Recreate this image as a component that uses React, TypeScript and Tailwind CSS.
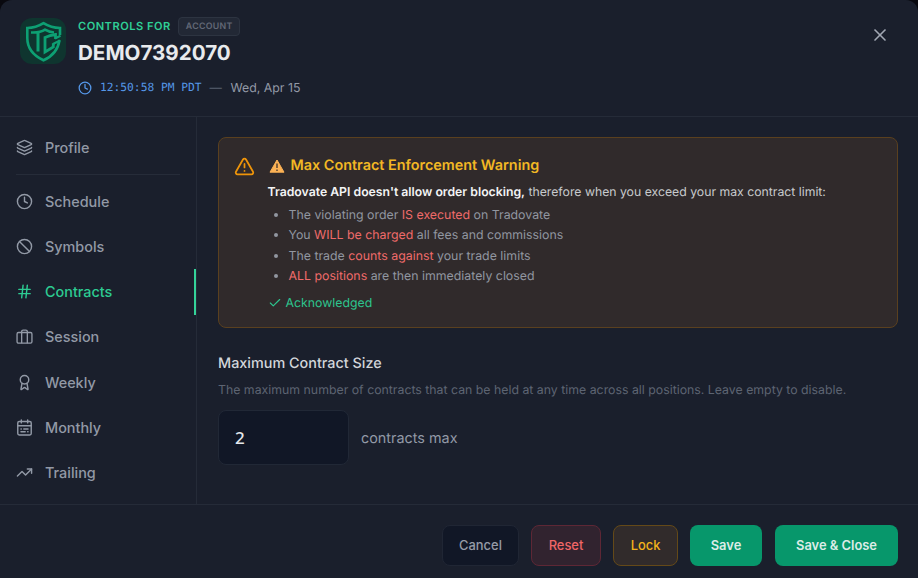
import React, { useState } from 'react';
import {
  Award,
  Ban,
  Check,
  Clock,
  Hash,
  Layers,
  TrendingUp,
  TriangleAlert,
  X,
} from 'lucide-react';

type Section =
  | 'Profile'
  | 'Schedule'
  | 'Symbols'
  | 'Contracts'
  | 'Session'
  | 'Weekly'
  | 'Monthly'
  | 'Trailing';

interface NavItemProps {
  label: Section;
  icon: React.ReactNode;
  active: boolean;
  onClick: () => void;
}

const iconProps = { size: 17, strokeWidth: 2 };

const SuitcaseIcon = () => (
  <svg width="17" height="17" viewBox="0 0 24 24" fill="none" stroke="currentColor" strokeWidth="1.9" strokeLinejoin="round">
    <rect x="1.5" y="5" width="21" height="15" rx="2" />
    <path d="M8 20V3.500a2 2 0 0 1 2-2h4a2 2 0 0 1 2 2v16.500" />
  </svg>
);

const MonthIcon = () => (
  <svg width="17" height="17" viewBox="0 0 24 24" fill="none" stroke="currentColor" strokeWidth="2" strokeLinecap="round" strokeLinejoin="round">
    <rect x="2.5" y="3.5" width="19" height="19" rx="2" />
    <path d="M7.5 1.5v4M16.5 1.5v4M2.5 9.5h19M7 14h.5M11 14h6M7 18h6M16.5 18h.5" />
  </svg>
);

const Logo = () => (
  <div className="mt-[18px] flex h-[46px] w-[46px] shrink-0 items-center justify-center rounded-xl bg-[#0f352f]">
    <svg width="37" height="41" viewBox="0 0 37 41" fill="none" stroke="#0da073" strokeWidth="2.6">
      <path d="M35 14V7C28.500 7 23 5 18.500 2.200C14 5 8.500 7 2.300 7V17c0 10.500 7 18 16.200 22.300C27 35.500 33 29.500 34.500 19" />
      <path d="M6 11.500c6 .3 11-.8 14-2.800c3 1.800 6 2.600 9 2.800" strokeWidth="2.600" />
      <path d="M13 12v18.500" strokeWidth="3" />
      <path d="M30.500 18v-4.500c-4 .5-7 1.300-10.500 3v14.500l8.300-5v-3.700" strokeWidth="2.800" />
      <path d="M28 23l7-3.500M30 17.500l5.500-2.800" strokeWidth="2.200" />
    </svg>
  </div>
);

const NavItem: React.FC<NavItemProps> = ({ label, icon, active, onClick }) => (
  <button
    type="button"
    onClick={onClick}
    className={`flex h-[45.200px] w-full items-center gap-3 border-r-2 pl-4 text-left text-[14.400px] font-medium ${
      active ? 'border-[#34d399] text-[#2dcb92]' : 'border-transparent text-[#9299a6]'
    }`}
  >
    {icon}
    <span>{label}</span>
  </button>
);

const navItems: { label: Section; icon: React.ReactNode }[] = [
  { label: 'Schedule', icon: <Clock {...iconProps} /> },
  { label: 'Symbols', icon: <Ban {...iconProps} /> },
  { label: 'Contracts', icon: <Hash {...iconProps} /> },
  { label: 'Session', icon: <SuitcaseIcon /> },
  { label: 'Weekly', icon: <Award {...iconProps} /> },
  { label: 'Monthly', icon: <MonthIcon /> },
  { label: 'Trailing', icon: <TrendingUp {...iconProps} /> },
];

const Red = ({ children }: { children: React.ReactNode }) => (
  <span className="text-[#ef6a6a]">{children}</span>
);

const Warning = () => (
  <div className="flex h-[191px] rounded-lg border border-[#5a401f] bg-[#302a2b] pl-[15px] pt-[17px]">
    <TriangleAlert size={21} strokeWidth={2} className="mt-px shrink-0 text-[#ee9409]" />
    <div className="ml-3 flex flex-col pl-[0.500px] pt-px">
      <h3 className="flex h-5 items-center text-[14.400px] font-semibold text-[#f2b824]">
        <svg width="16" height="14" viewBox="0 0 16 14" className="ml-[1.500px] mr-[5.500px]">
          <path d="M8 1 15 13.200H1Z" fill="#fcb255" stroke="#fcb255" strokeWidth="1" strokeLinejoin="round" />
          <path d="M8 4.500v4.500M8 10.600v1.400" stroke="#584331" strokeWidth="1.500" />
        </svg>
        Max Contract Enforcement Warning
      </h3>
      <p className="mt-[6px] text-[12.250px] leading-5 text-[#c8cacd]">
        <span className="font-semibold text-[#f3f4f5]">Tradovate API doesn't allow order blocking,</span>{' '}
        therefore when you exceed your max contract limit:
      </p>
      <ul className="mt-[3px] list-disc pl-[21px] text-[12.350px] leading-[20.400px] text-[#9196a0] marker:text-[14px]">
        <li>The violating order <Red>IS executed</Red> on Tradovate</li>
        <li>You <Red>WILL be charged</Red> all fees and commissions</li>
        <li>The trade <Red>counts against</Red> your trade limits</li>
        <li><Red>ALL positions</Red> are then immediately closed</li>
      </ul>
      <div className="mt-[6px] flex items-center gap-1 text-[12.300px] leading-5 text-[#2dc58e]">
        <Check size={14} strokeWidth={2} />
        Acknowledged
      </div>
    </div>
  </div>
);

const App: React.FC = () => {
  const [section, setSection] = useState<Section>('Contracts');
  const [maxContracts, setMaxContracts] = useState('2');

  return (
    <div className="h-[578px] w-[918px] overflow-hidden bg-[#09090f] font-['Inter',sans-serif] [text-rendering:geometricPrecision]">
      <div className="flex h-full flex-col overflow-hidden rounded-t-xl bg-[#1a1f2c]">
        <header className="flex h-[117px] shrink-0 border-b border-[#252b38] pl-5">
          <Logo />
          <div className="ml-3 flex flex-col">
            <div className="mt-[17px] flex h-[19px] items-center gap-[7.500px]">
              <span className="text-[11.100px] font-semibold tracking-[0.5px] text-[#2fcf96]">CONTROLS FOR</span>
              <span className="flex h-[19px] items-center rounded border border-[#2d3441] bg-[#222835] px-[6.500px] pt-px text-[8.800px] font-semibold tracking-[0.3px] text-[#626977]">
                ACCOUNT
              </span>
            </div>
            <h1 className="mt-[3px] text-[20.600px] font-bold leading-7 text-[#e8eaed]">DEMO7392070</h1>
            <div className="mt-[11px] flex h-5 items-center text-[12.350px] text-[#9299a6]">
              <Clock size={14} strokeWidth={2.2} className="text-[#5597e8]" />
              <span className="ml-2 font-['DejaVu_Sans_Mono',monospace] text-[11.250px] text-[#5597e8]">12:50:58 PM PDT</span>
              <span className="ml-2 pt-px text-[#596170]">—</span>
              <span className="ml-[8.500px] pt-px">Wed, Apr 15</span>
            </div>
          </div>
          <button type="button" aria-label="Close" className="ml-auto mr-[28px] mt-[25px] h-5 text-[#a1a7b3]">
            <X size={20} strokeWidth={2} />
          </button>
        </header>

        <div className="flex h-[387px] shrink-0">
          <nav className="w-[197px] shrink-0 border-r border-[#252b38] pt-2">
            <NavItem
              label="Profile"
              icon={<Layers {...iconProps} />}
              active={section === 'Profile'}
              onClick={() => setSection('Profile')}
            />
            <div className="mx-4 mb-[3.800px] mt-1 h-px bg-[#262c39]" />
            {navItems.map((item) => (
              <NavItem
                key={item.label}
                label={item.label}
                icon={item.icon}
                active={section === item.label}
                onClick={() => setSection(item.label)}
              />
            ))}
          </nav>

          <main className="flex-1 pl-[21px] pr-5 pt-5">
            <Warning />
            <h2 className="mt-[26px] text-[14.400px] font-medium leading-5 text-[#d3d6db]">Maximum Contract Size</h2>
            <p className="mt-[6px] text-[12.320px] leading-5 text-[#5d6472]">
              The maximum number of contracts that can be held at any time across all positions. Leave empty to disable.
            </p>
            <div className="mt-[10px] flex items-center gap-3">
              <input
                type="text"
                value={maxContracts}
                onChange={(e) => setMaxContracts(e.target.value)}
                className="h-[55px] w-[131px] rounded-lg border border-[#212836] bg-[#111726] px-4 font-['Noto_Sans',sans-serif] text-[17px] font-medium text-[#e4e7eb] focus:outline-none"
              />
              <span className="pt-0.5 text-[14.400px] text-[#9299a6]">contracts max</span>
            </div>
          </main>
        </div>

        <footer className="flex flex-1 items-start justify-end border-t border-[#252b38] pr-5 pt-5 text-[12.900px] font-medium">
          <button type="button" className="h-[41px] w-[77px] rounded-lg border border-[#202634] bg-[#111726] text-[#969ca8]">
            Cancel
          </button>
          <button type="button" className="ml-3 h-[41px] w-[70px] rounded-lg border border-[#5e2735] bg-[#31232f] text-[#ef6666]">
            Reset
          </button>
          <button type="button" className="ml-3 h-[41px] w-[65px] rounded-lg border border-[#644918] bg-[#312b2b] text-[#f2b31b]">
            Lock
          </button>
          <button type="button" className="ml-3 h-[41px] w-[72px] rounded-lg bg-[#07976b] font-semibold text-[#dcece7]">
            Save
          </button>
          <button type="button" className="ml-[13px] h-[41px] w-[123px] rounded-lg bg-[#07976b] font-semibold text-[#dcece7]">
            Save &amp; Close
          </button>
        </footer>
      </div>
    </div>
  );
};

export default App;
